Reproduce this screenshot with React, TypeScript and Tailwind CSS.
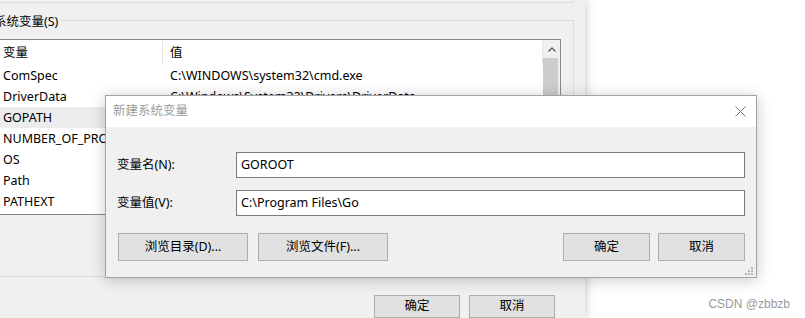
import React from "react"

const rows = [
  { name: "ComSpec", value: "C:\\WINDOWS\\system32\\cmd.exe" },
  { name: "DriverData", value: "C:\\Windows\\System32\\Drivers\\DriverData" },
  { name: "GOPATH", value: "C:\\Users\\zbbzb\\go", selected: true },
  { name: "NUMBER_OF_PROCESSORS", value: "8" },
  { name: "OS", value: "Windows_NT" },
  { name: "Path", value: "C:\\WINDOWS\\system32;C:\\WINDOWS;" },
  { name: "PATHEXT", value: ".COM;.EXE;.BAT;.CMD;.VBS;.VBE;.JS" },
]

function WinButton({ label, className }: { label: string; className: string }) {
  return (
    <button
      className={`flex items-center justify-center border border-[#adadad] bg-[#e1e1e1] text-[12.5px] text-black ${className}`}
    >
      {label}
    </button>
  )
}

function VarList() {
  return (
    <div className="mt-[18px] flex h-[176px] w-[561px] border-y border-r border-[#828790] bg-white">
      <div className="flex flex-1 flex-col overflow-hidden">
        <div className="flex h-[25px] shrink-0 items-center pt-px">
          <div className="flex h-full w-[163px] shrink-0 items-center border-r border-[#e5e5e5] pl-[3px]">
            变量
          </div>
          <div className="flex h-full flex-1 items-center border-r border-[#e5e5e5] pl-[7px]">
            值
          </div>
        </div>
        {rows.map((row) => (
          <div
            key={row.name}
            className={`flex h-[21px] shrink-0 items-center whitespace-nowrap pt-px ${
              row.selected ? "bg-[#ececec]" : ""
            }`}
          >
            <div className="w-[163px] shrink-0 pl-[3px]">{row.name}</div>
            <div className="pl-[7px]">{row.value}</div>
          </div>
        ))}
      </div>
      <div className="flex w-[17px] shrink-0 flex-col bg-[#f0f0f0]">
        <div className="flex h-[18px] items-center justify-center">
          <svg width="8" height="5" viewBox="0 0 8 5">
            <polyline points="0.5,4.5 4,1 7.5,4.5" fill="none" stroke="#606060" strokeWidth="1.4" />
          </svg>
        </div>
        <div className="mr-[2px] flex-1 bg-[#cdcdcd]" />
      </div>
    </div>
  )
}

function NewVarDialog() {
  return (
    <div className="absolute left-[105px] top-[95px] flex h-[183px] w-[652px] flex-col border border-[#a3a3a3] bg-[#f0f0f0] shadow-[0_2px_14px_rgba(0,0,0,0.22)]">
      <div className="flex h-[31px] shrink-0 items-center justify-between bg-white pl-[7px] pr-[10px] text-[#9c9c9c]">
        <span>新建系统变量</span>
        <svg width="11" height="11" viewBox="0 0 11 11">
          <path d="M0.5 0.5 L10.5 10.5 M10.5 0.5 L0.5 10.5" stroke="#7a7a7a" strokeWidth="1" />
        </svg>
      </div>
      <div className="relative flex flex-1 flex-col px-[11px] pt-[25px]">
        <div className="flex h-[26px] items-center">
          <span className="w-[119px] shrink-0">变量名(N):</span>
          <div className="flex h-full flex-1 items-center border border-[#7a7a7a] bg-white pl-[4px]">GOROOT</div>
        </div>
        <div className="mt-[12px] flex h-[26px] items-center">
          <span className="w-[119px] shrink-0">变量值(V):</span>
          <div className="flex h-full flex-1 items-center border border-[#7a7a7a] bg-white pl-[4px]">
            C:\Program Files\Go
          </div>
        </div>
        <div className="mt-[17px] flex h-[28px] pl-px">
          <WinButton label="浏览目录(D)..." className="w-[130px]" />
          <WinButton label="浏览文件(F)..." className="ml-[10px] w-[130px]" />
          <WinButton label="确定" className="ml-auto w-[87px]" />
          <WinButton label="取消" className="ml-[8px] w-[87px]" />
        </div>
        <svg className="absolute bottom-[2px] right-[3px]" width="8" height="8" viewBox="0 0 8 8" fill="#b4b4b4">
          <rect x="6" y="0" width="2" height="2" />
          <rect x="3" y="3" width="2" height="2" />
          <rect x="6" y="3" width="2" height="2" />
          <rect x="0" y="6" width="2" height="2" />
          <rect x="3" y="6" width="2" height="2" />
          <rect x="6" y="6" width="2" height="2" />
        </svg>
      </div>
    </div>
  )
}

export default function App() {
  return (
    <div className="relative flex h-[318px] w-[805px] overflow-hidden bg-white font-['Segoe_UI','Noto_Sans','Noto_Sans_CJK_SC',sans-serif] text-[12.5px] text-black">
      <div className="flex h-full w-[585px] shrink-0 flex-col bg-[#f0f0f0] shadow-[2px_0_8px_rgba(0,0,0,0.18)]">
        <div className="h-[3px] w-[574px] shrink-0 border-b border-r border-[#dcdcdc]" />
        <div className="relative mt-[17px] h-[257px] w-[574px] shrink-0 border-y border-r border-[#dcdcdc]">
          <span className="absolute -top-[9px] left-[-6px] bg-[#f0f0f0] pr-[3px] leading-[20px]">
            系统变量(S)
          </span>
          <VarList />
        </div>
        <div className="ml-[374px] mt-[18px] flex h-[27px] gap-[9px]">
          <WinButton label="确定" className="w-[86px]" />
          <WinButton label="取消" className="w-[86px]" />
        </div>
      </div>
      <NewVarDialog />
      <span className="absolute right-[15px] top-[295px] font-['Liberation_Sans',sans-serif] text-[12px] text-[#9a9a9a]">
        CSDN @zbbzb
      </span>
    </div>
  )
}
